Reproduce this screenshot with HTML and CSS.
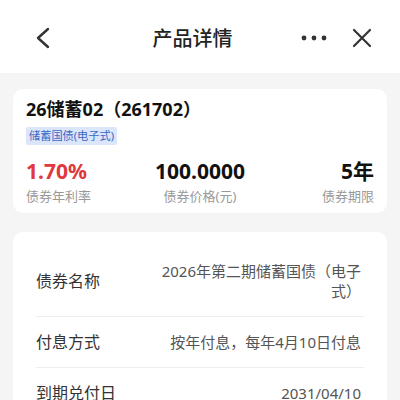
FILE: index.html
```html
<!DOCTYPE html>
<html lang="zh-CN">
<head>
<meta charset="utf-8">
<link rel="stylesheet" href="styles.css">
</head>
<body>
<header class="nav">
  <div class="nav-left">
    <svg class="icon-back" width="16" height="22" viewBox="0 0 16 22"><path d="M13 2 L3 11 L13 20" fill="none" stroke="#333" stroke-width="2.4" stroke-linecap="round" stroke-linejoin="round"/></svg>
  </div>
  <div class="nav-title">产品详情</div>
  <div class="nav-right">
    <svg class="icon-more" width="26" height="6" viewBox="0 0 26 6"><circle cx="3" cy="3" r="2.4" fill="#333"/><circle cx="13" cy="3" r="2.4" fill="#333"/><circle cx="23" cy="3" r="2.4" fill="#333"/></svg>
    <svg class="icon-close" width="20" height="20" viewBox="0 0 20 20"><path d="M2 2 L18 18 M18 2 L2 18" fill="none" stroke="#333" stroke-width="2.2" stroke-linecap="round"/></svg>
  </div>
</header>
<main class="page">
  <section class="card summary">
    <div class="bond-name">26储蓄02（261702）</div>
    <span class="tag">储蓄国债(电子式)</span>
    <div class="stats">
      <div class="stat left"><div class="num red">1.70%</div><div class="lbl">债券年利率</div></div>
      <div class="stat mid"><div class="num">100.0000</div><div class="lbl">债券价格(元)</div></div>
      <div class="stat right"><div class="num">5年</div><div class="lbl">债券期限</div></div>
    </div>
  </section>
  <section class="card details">
    <div class="row"><div class="k">债券名称</div><div class="v">2026年第二期储蓄国债（电子式）</div></div>
    <div class="row"><div class="k">付息方式</div><div class="v">按年付息，每年4月10日付息</div></div>
    <div class="row"><div class="k">到期兑付日</div><div class="v">2031/04/10</div></div>
  </section>
</main>
</body>
</html>
```
FILE: styles.css
```css
* { box-sizing: border-box; }
html, body { margin: 0; padding: 0; }
body {
  background: #f5f5f5;
  font-family: "Noto Sans", "Noto Sans CJK SC", sans-serif;
  color: #1a1a1a;
  width: 400px;
  height: 400px;
  overflow: hidden;
}
.nav {
  height: 73px;
  background: #fff;
  display: flex;
  align-items: center;
  padding: 0 28px 0 35px;
}
.nav-left { width: 80px; display: flex; align-items: center; padding-top: 2px; }
.nav-title {
  flex: 1;
  text-align: center;
  font-family: "Noto Sans CJK SC", sans-serif;
  font-size: 20px;
  font-weight: 500;
  color: #222;
  padding-right: 22px;
  padding-top: 2px;
}
.nav-right { width: 80px; display: flex; align-items: center; justify-content: flex-end; gap: 25px; padding-top: 2px; }
.icon-back, .icon-more, .icon-close { display: block; }
.page { padding: 16px 13px 0; }
.card {
  background: #fff;
  border-radius: 10px;
}
.summary { padding: 8px 13px 7px; }
.bond-name {
  font-size: 18px;
  font-weight: 700;
  line-height: 24px;
  color: #111;
}
.tag {
  display: inline-block;
  margin-top: 6px;
  height: 18px;
  line-height: 18px;
  padding: 0 3px;
  font-size: 11.2px;
  color: #3b68c4;
  background: #dbe6fa;
  border-radius: 2px;
}
.stats {
  display: flex;
  justify-content: space-between;
  margin-top: 13px;
}
.stat { flex: 1; }
.stat.mid { text-align: center; }
.stat.right { text-align: right; }
.num {
  font-size: 21px;
  font-weight: 700;
  line-height: 26px;
  color: #111;
}
.num.red { color: #e0383d; }
.lbl {
  margin-top: 2px;
  font-size: 13px;
  line-height: 20px;
  color: #999;
}
.details { margin-top: 19px; padding: 14px 23px 0; }
.row {
  display: flex;
  align-items: center;
  justify-content: space-between;
  padding: 15px 0;
  border-bottom: 1px solid #eeeeee;
  line-height: 20px;
}
.k { font-size: 16px; color: #333; flex: none; }
.v {
  font-size: 15px;
  color: #555;
  text-align: right;
  max-width: 206px;
  margin-right: 3px;
}
```
